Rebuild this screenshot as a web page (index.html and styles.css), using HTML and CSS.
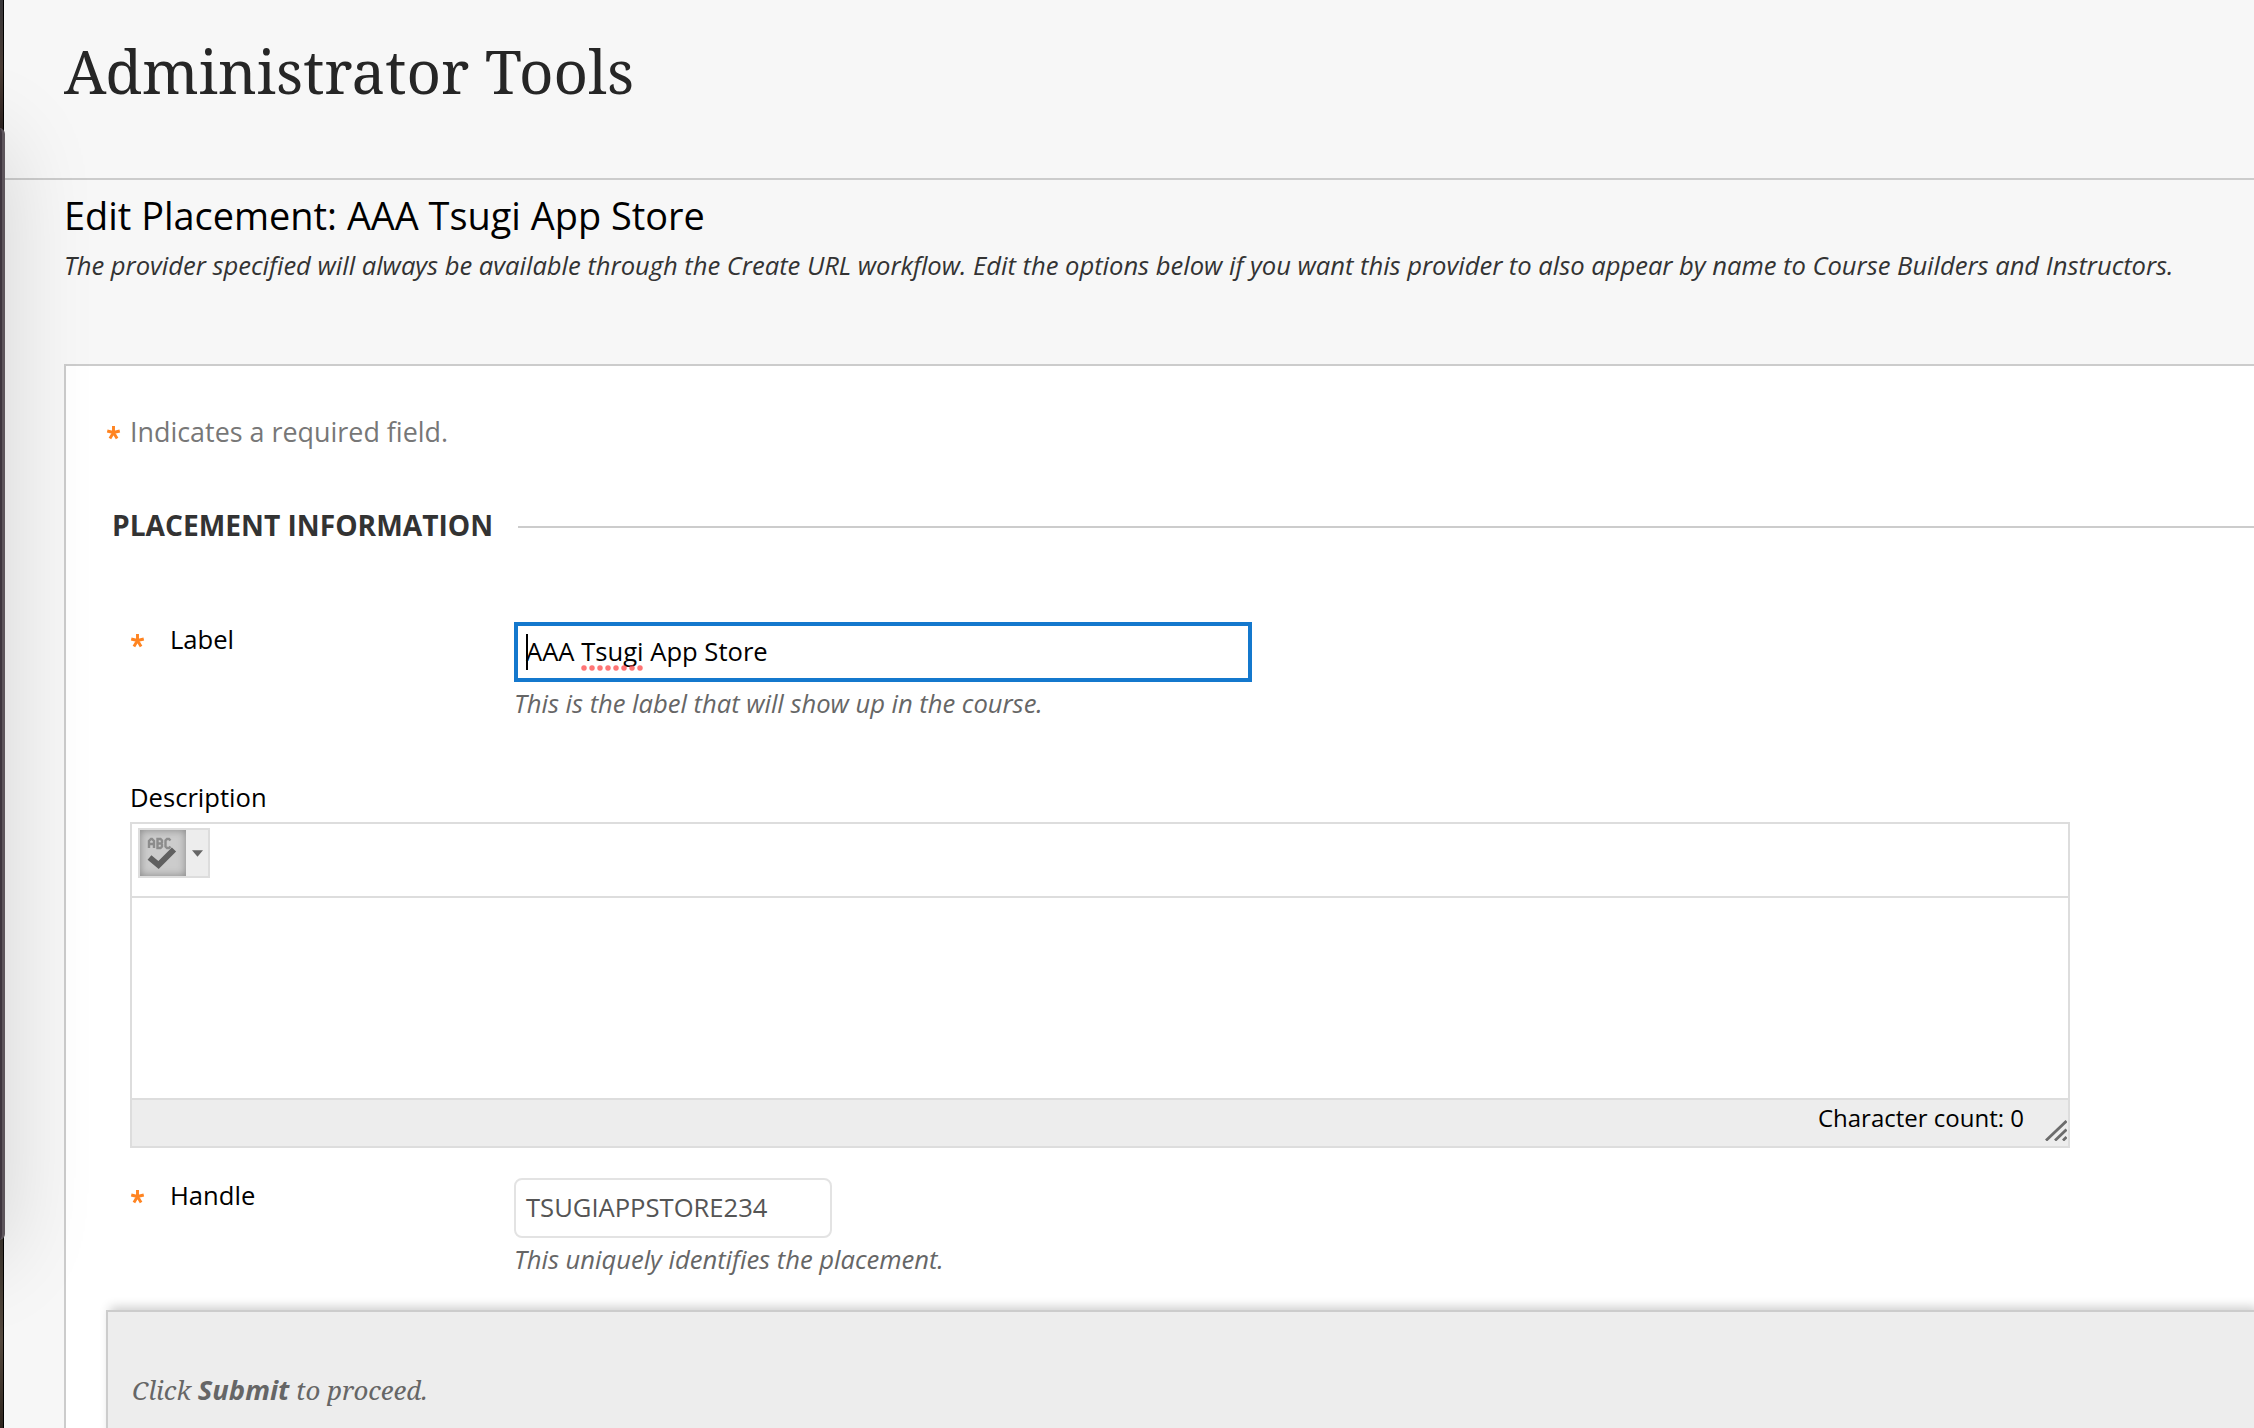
FILE: index.html
```
<!DOCTYPE html>
<html lang="en">
<head>
<meta charset="utf-8">
<title>Administrator Tools</title>
<link rel="stylesheet" href="styles.css">
</head>
<body>
<div class="desktop-edge"></div>
<div class="page">
  <header class="page-header"><h1>Administrator Tools</h1></header>
  <section class="intro">
    <h2>Edit Placement: AAA Tsugi App Store</h2>
    <p>The provider specified will always be available through the Create URL workflow. Edit the options below if you want this provider to also appear by name to Course Builders and Instructors.</p>
  </section>
  <form class="panel">
    <p class="required-note"><svg class="star" viewBox="0 0 12 12"><path d="M6 6V0M6 6L.2 4.600M6 6l5.800-1.400M6 6L2.700 11.500M6 6l3.300 5.500"/></svg>Indicates a required field.</p>
    <h3 class="section-title">PLACEMENT INFORMATION</h3>
    <div class="row">
      <div class="name"><svg class="star" viewBox="0 0 12 12"><path d="M6 6V0M6 6L.2 4.600M6 6l5.800-1.400M6 6L2.700 11.500M6 6l3.300 5.500"/></svg>Label</div>
      <div>
        <div class="field focused"><i class="caret"></i>AAA <span class="misspelled">Tsugi</span> App Store</div>
        <p class="hint">This is the label that will show up in the course.</p>
      </div>
    </div>
    <div class="description">Description</div>
    <div class="editor">
      <div class="toolbar">
        <div class="spell-button">
          <div class="spell-face">
            <svg viewBox="0 0 46 46"><g class="abc"><path d="M9 18v-7l2-2h1l2 2v7M9 14h5"/><path d="M17.500 9v9h3l1.500-1.500v-2l-1-1 1-1v-2L20.500 9zM18 13.500h3"/><path d="M30.500 10.500L29 9h-2l-1.500 1.500v6L27 18h2l1.500-1.500"/></g><path class="check" d="M9.500 27.500l9 7.500L34 19.500"/></svg>
          </div>
          <div class="spell-menu"><svg viewBox="0 0 10 6"><path d="M0 0h10L5 6z"/></svg></div>
        </div>
      </div>
      <div class="edit-area"></div>
      <div class="status">Character count: 0<svg class="grip" viewBox="0 0 22 21"><path d="M1 20.500L21.500 1M10 20.500L21.500 9.500M18 20.500l3.500-3.500"/></svg></div>
    </div>
    <div class="row handle-row">
      <div class="name"><svg class="star" viewBox="0 0 12 12"><path d="M6 6V0M6 6L.2 4.600M6 6l5.800-1.400M6 6L2.700 11.500M6 6l3.300 5.500"/></svg>Handle</div>
      <div>
        <div class="field short">TSUGIAPPSTORE234</div>
        <p class="hint">This uniquely identifies the placement.</p>
      </div>
    </div>
    <div class="submit-bar"><p>Click <b>Submit</b> to proceed.</p></div>
  </form>
</div>
<div class="window-edge"></div>
</body>
</html>
```
FILE: styles.css
```
* { box-sizing: border-box; }
body { margin: 0; width: 2254px; height: 1428px; overflow: hidden; display: flex; position: relative; background: #f7f7f7; color: #000; font: 25.6px/36px "Open Sans", sans-serif; }
h1, h2, h3, p { margin: 0; font-weight: 400; }
.desktop-edge { width: 4px; flex: none; border-right: 1px solid #000; background: linear-gradient(#38373a, #4b3d35 70px, #2c211f 130px, #3b342c 1240px, #55493e 1340px, #2e251e); }
.page { flex: 1; min-width: 0; height: 1428px; overflow: hidden; }
.page-header { height: 180px; padding: 31px 0 0 60px; border-bottom: 2px solid #ccc; }
h1 { font: 60px/80px "Noto Serif", serif; letter-spacing: .05px; color: #262626; white-space: nowrap; }
.intro { padding: 9px 0 80px 60px; white-space: nowrap; }
h2 { font-size: 37.9px; line-height: 52px; }
.intro p { margin-top: 7px; font-style: italic; letter-spacing: -.022px; color: #333; }
.panel { margin-left: 60px; padding: 48px 0 0 40px; height: 1100px; border: solid #ccc; border-width: 2px 0 0 2px; background: #fff; }
.star { width: 13px; height: 13px; overflow: visible; fill: none; stroke: #ff8421; stroke-width: 2.7; flex: none; }
.required-note { display: flex; align-items: center; gap: 10px; padding-left: 1px; font-size: 26.9px; color: #777; }
.section-title { display: flex; align-items: center; gap: 25px; margin: 57px 0 79px; padding-left: 6px; font-size: 28.16px; font-weight: 700; color: #333; }
.section-title::after { content: ""; flex: 1; height: 2px; margin-top: 4px; background: #ccc; }
.row { display: flex; padding-left: 25px; }
.name { display: flex; align-items: center; gap: 26px; width: 383px; height: 36px; }
.field { position: relative; width: 738px; height: 60px; border: 4px solid #1478cd; padding: 6px 8px; line-height: 40px; white-space: nowrap; }
.caret { position: absolute; left: 8px; top: 8px; width: 2px; height: 36px; background: #000; }
.misspelled { position: relative; }
.misspelled::after { content: ""; position: absolute; left: 0; bottom: -2px; width: 64px; height: 6px; background: radial-gradient(circle at 3px 3px, rgba(255,70,70,.75) 2.2px, transparent 3.3px) 0 0 / 8px 6px repeat-x; }
.short { width: 318px; border: 2px solid #e3e3e3; border-radius: 8px; padding: 8px 10px; color: #555; }
.hint { margin-top: 4px; font-style: italic; letter-spacing: -.022px; color: #666; }
.description { margin: 58px 0 6px; padding-left: 24px; }
.editor { width: 1940px; height: 326px; margin-left: 24px; border: 2px solid #ddd; display: flex; flex-direction: column; }
.toolbar { height: 74px; padding: 4px 6px; border-bottom: 2px solid #ddd; }
.spell-button { display: flex; width: 72px; height: 50px; border: 2px solid #ddd; background: #ededed; }
.spell-face { width: 46px; height: 46px; background: #ccc; box-shadow: inset 0 0 9px rgba(0,0,0,.35); }
.spell-face svg { display: block; filter: blur(.5px); }
.abc { fill: none; stroke: #8c8c8c; stroke-width: 2.4; }
.check { fill: none; stroke: #606060; stroke-width: 6; }
.spell-menu { flex: 1; display: flex; align-items: center; justify-content: center; }
.spell-menu svg { width: 11px; height: 7px; fill: #666; }
.edit-area { flex: 1; }
.status { display: flex; align-items: flex-start; justify-content: flex-end; gap: 21px; height: 48px; border-top: 2px solid #ddd; background: #ededed; font-size: 24px; }
.grip { width: 22px; height: 21px; margin: 20px 1px 0 0; fill: none; stroke: #6c6c6c; stroke-width: 2.8; }
.handle-row { margin-top: 30px; }
.submit-bar { height: 200px; margin-top: 32px; padding: 60px 0 0 24px; border: solid #ccc; border-width: 2px 0 0 2px; background: #ededed; box-shadow: 4px -3px 10px rgba(0,0,0,.2); }
.submit-bar p { font-family: "Noto Serif", serif; font-size: 25.8px; font-style: italic; color: #666; }
.submit-bar b { font-family: "Open Sans", sans-serif; font-size: 27.4px; line-height: 1; }
.window-edge { position: absolute; left: -300px; top: 128px; width: 305px; height: 1112px; border-right: 3px solid #5d555b; border-radius: 0 6px 6px 0; background: #3e353e; box-shadow: 0 14px 90px rgba(0,0,0,.15); }
```
